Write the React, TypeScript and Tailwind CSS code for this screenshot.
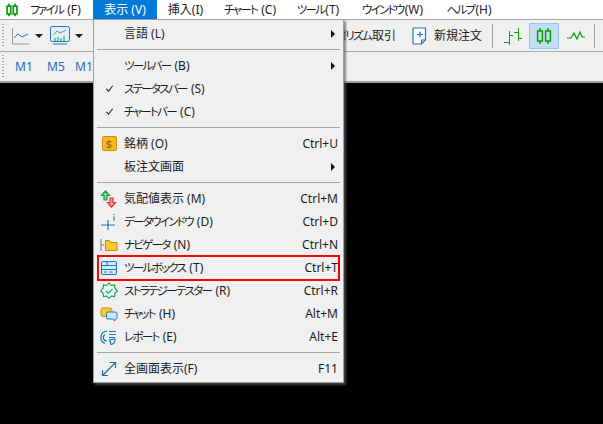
const font = { fontFamily: '"Noto Sans", "Noto Sans CJK JP", sans-serif' };

// the katakana in the reference is set much narrower than the kanji
function Label({ text }: { text: string }) {
  return (
    <>
      {text.split(/([ァ-ヶー]+)/).map((part, i) =>
        i % 2 === 1 ? (
          <span key={i} className="text-[11.500px] tracking-[-1.700px] mr-[1px]">{part}</span>
        ) : (
          <span key={i}>{part}</span>
        ),
      )}
    </>
  );
}

function Grip() {
  return (
    <div className="flex flex-col gap-[2px] w-[3px] h-[24px] overflow-hidden">
      {Array.from({ length: 8 }).map((_, i) => (
        <div key={i} className="w-[2px] h-[1px] bg-[#a8a8a8]" />
      ))}
    </div>
  );
}

function Caret() {
  return <div className="w-0 h-0 border-x-[4px] border-x-transparent border-t-[4px] border-t-[#222]" />;
}

function Candle({ className = 'w-[18px] h-[18px]', weight = '1.500' }: { className?: string; weight?: string }) {
  return (
    <svg viewBox="0 0 18 18" className={className} fill="none" stroke="#0aa00a" strokeWidth={weight}>
      <path d="M5 1v3M5 14v3M13 1v3M13 14v3" />
      <rect x="2.600" y="4" width="4.800" height="10" />
      <rect x="10.600" y="4" width="4.800" height="10" />
    </svg>
  );
}

type Row =
  | { sep: true }
  | { sep?: false; label: string; key?: string; icon?: React.ReactNode; sub?: boolean; check?: boolean };

const rows: Row[] = [
  { label: '言語 (L)', sub: true },
  { sep: true },
  { label: 'ツールバー (B)', sub: true },
  { label: 'ステータスバー (S)', check: true },
  { label: 'チャートバー (C)', check: true },
  { sep: true },
  {
    label: '銘柄 (O)',
    key: 'Ctrl+U',
    icon: (
      <div className="w-[15px] h-[15px] rounded-[2px] bg-[#f5b921] border border-[#c98f0a] flex items-center justify-center text-[11px] leading-none font-bold text-[#a8720a]">
        $
      </div>
    ),
  },
  { label: '板注文画面', sub: true },
  { sep: true },
  {
    label: '気配値表示 (M)',
    key: 'Ctrl+M',
    icon: (
      <svg viewBox="0 0 18 18" className="w-[18px] h-[18px]" fill="none" strokeWidth="1.200">
        <path d="M5.500 1 1.500 5.500H4V10H7V5.500H9.500Z" stroke="#11a03c" fill="#7fd89a" />
        <path d="M11.500 17 7.500 12.500H10V8H13V12.500H15.500Z" stroke="#d8352e" fill="#f4a39c" />
      </svg>
    ),
  },
  {
    label: 'データウインドウ (D)',
    key: 'Ctrl+D',
    icon: (
      <svg viewBox="0 0 18 18" className="w-[18px] h-[18px]" fill="none" stroke="#1a6fb0" strokeWidth="1.100">
        <path d="M1 12h5M10 12h5M8 7v3.500M8 13.500V17" />
        <path d="M8 11l1 1-1 1-1-1z" />
        <path d="M14 1v1M14 3.500V8" />
      </svg>
    ),
  },
  {
    label: 'ナビゲータ (N)',
    key: 'Ctrl+N',
    icon: (
      <svg viewBox="0 0 18 18" className="w-[18px] h-[18px]" fill="none">
        <path d="M1 3v12M1 9h3" stroke="#777" strokeWidth="1" />
        <path d="M5.500 4.500h4l1 2h6.500v8h-11.500z" fill="#fbcb2f" stroke="#b98d10" strokeWidth="1" />
      </svg>
    ),
  },
  {
    label: 'ツールボックス (T)',
    key: 'Ctrl+T',
    icon: (
      <svg viewBox="0 0 18 18" className="w-[18px] h-[18px]" fill="none" stroke="#1a78c2" strokeWidth="1.100">
        <rect x="1.500" y="2.500" width="15" height="13" rx="1.500" fill="#d7ebfa" />
        <path d="M1.500 6.500h15M7 2.500v4M1.500 10.500h15M4 13h3M9.500 13h3" />
      </svg>
    ),
  },
  {
    label: 'ストラテジーテスター (R)',
    key: 'Ctrl+R',
    icon: (
      <svg viewBox="0 0 18 18" className="w-[18px] h-[18px]" fill="none" stroke="#11a03c" strokeWidth="1.100">
        <path d="M9 1l2.300 2.500 3.200-.5.500 3.200L17.500 9 15 11l-.5 3.500-3.200-.5L9 16.500 6.700 14l-3.200.5L3 11 .5 9 3 6.200 3.500 3l3.200.5z" />
        <path d="M6 9l2.200 2.200L12.500 7" strokeWidth="1.400" stroke="#26b5a0" />
      </svg>
    ),
  },
  {
    label: 'チャット (H)',
    key: 'Alt+M',
    icon: (
      <svg viewBox="0 0 18 18" className="w-[18px] h-[18px]" strokeWidth="1">
        <rect x="1" y="3" width="11" height="8.500" rx="2" fill="#fbc92f" stroke="#c1930f" />
        <path d="M8 7h7.500a1.500 1.500 0 0 1 1.500 1.500v4a1.500 1.500 0 0 1-1.500 1.500H15v2l-2.500-2H8a1.500 1.500 0 0 1-1.500-1.500v-4A1.500 1.500 0 0 1 8 7z" fill="#cfe6f8" stroke="#1a78c2" />
      </svg>
    ),
  },
  {
    label: 'レポート (E)',
    key: 'Alt+E',
    icon: (
      <svg viewBox="0 0 18 18" className="w-[18px] h-[18px]" fill="none" stroke="#1a78c2" strokeWidth="1.200">
        <path d="M7 3A6.500 6.500 0 0 0 5 15.500" />
        <path d="M5 6.500A3.500 3.500 0 0 0 7 13" />
        <path d="M9 3.500h7M9 6.500h7M9 9.500h6M15 11a5 5 0 0 1-4 5.500L9.500 12z" />
      </svg>
    ),
  },
  { sep: true },
  {
    label: '全画面表示(F)',
    key: 'F11',
    icon: (
      <svg viewBox="0 0 18 18" className="w-[18px] h-[18px]" fill="none" stroke="#1a6fb0" strokeWidth="1.200">
        <path d="M2.500 15.500 15.500 2.500M10 2.500h5.500V8M2.500 10v5.500H8" />
      </svg>
    ),
  },
];

const menuItems = [
  { label: 'ファイル (F)', w: 'w-[63px] justify-start' },
  { label: '表示 (V)', w: 'w-[64px] justify-center', active: true },
  { label: '挿入(I)', w: 'w-[57px] justify-center' },
  { label: 'チャート (C)', w: 'w-[72px] justify-center' },
  { label: 'ツール(T)', w: 'w-[64px] justify-center' },
  { label: 'ウインドウ(W)', w: 'w-[85px] justify-center' },
  { label: 'ヘルプ(H)', w: 'w-[68px] justify-center' },
];

export default function App() {
  return (
    <div className="relative w-[603px] h-[424px] overflow-hidden bg-black text-[12px] text-[#1c1c1c] [font-feature-settings:'palt']" style={font}>
      <div className="h-[83px] bg-[#f0f0f0] border-b-2 border-[#a0a0a0] flex flex-col">
        <div className="h-[19px] bg-white flex items-center pl-[5px]">
          <Candle className="w-[14px] h-[14px] mr-[11px]" weight="2.200" />
          {menuItems.map((m) => (
            <div
              key={m.label}
              className={`${m.w} h-[19px] flex items-center whitespace-pre ${m.active ? 'bg-[#0078d7] text-white' : ''}`}
            >
              <Label text={m.label} />
            </div>
          ))}
        </div>
        <div className="h-[33px] border-t border-[#a8a8a8] border-b border-b-[#a8a8a8] flex items-center pl-[2px]">
          <Grip />
          <svg viewBox="0 0 18 18" className="w-[18px] h-[18px] ml-[7px]" fill="none">
            <path d="M.5 1v16h17" stroke="#999" />
            <path d="M2 11l4-4 4 3 6-3" stroke="#1a78c2" />
          </svg>
          <div className="ml-[5px]"><Caret /></div>
          <svg viewBox="0 0 20 20" className="w-[20px] h-[20px] ml-[7px]" fill="none">
            <rect x=".5" y=".5" width="19" height="15" rx="2" stroke="#1a78c2" fill="#e0f0fb" />
            <path d="M3 9l4-4 3 2 6-3" stroke="#888" />
            <path d="M5 15v-3M8 15v-4M11 15v-3M14 15v-5" stroke="#11a03c" />
            <path d="M3 18h14" stroke="#1a78c2" />
          </svg>
          <div className="ml-[5px]"><Caret /></div>
          <div className="flex-1 flex justify-end items-center">
            <span className="whitespace-nowrap"><Label text="アルゴリズム取引" /></span>
            <svg viewBox="0 0 16 18" className="w-[16px] h-[18px] ml-[16px]" fill="none" stroke="#1a78c2" strokeWidth="1.200">
              <path d="M2.500 1h11v12l-4 4h-7.500a1 1 0 0 1-1-1V2a1 1 0 0 1 1-1z" fill="#fff" />
              <path d="M9.500 17v-4h4M5 7.500h6M8 4.500v6" />
            </svg>
            <span className="ml-[6px] whitespace-nowrap">新規注文</span>
            <div className="w-px h-[24px] bg-[#a0a0a0] ml-[10px]" />
            <svg viewBox="0 0 18 18" className="w-[18px] h-[18px] ml-[11px]" fill="none" stroke="#0aa00a" strokeWidth="1">
              <path d="M5.500 4v14M0 15.500h5.500M5.500 8.500H9M14.500 1v13M10 5.500h4.500M14.500 11.500H18" />
            </svg>
            <div className="w-[30px] h-[26px] ml-[7px] bg-[#c2dcf2] border border-[#93c7f0] flex items-center justify-center">
              <Candle />
            </div>
            <svg viewBox="0 0 18 12" className="w-[18px] h-[12px] ml-[8px]" fill="none" stroke="#0aa00a" strokeWidth="1.200">
              <path d="M0 8h4l3-5 3 6 3-7 2 5h3" />
            </svg>
            <div className="w-px h-[24px] bg-[#a0a0a0] ml-[9px] mr-[8px]" />
          </div>
        </div>
        <div className="flex-1 flex items-center pl-[2px] text-[#1a6fb0]">
          <Grip />
          <div className="ml-[10px] w-[32px]">M1</div>
          <div className="w-[28px]">M5</div>
          <div className="w-[28px]">M15</div>
        </div>
      </div>

      <div className="absolute left-[93px] top-[19px] w-[251px] h-[364px] bg-[#f0f0f0] border border-[#a0a0a0] shadow-[2px_2px_2px_rgba(90,90,90,0.7)] pt-[2px]">
        {rows.map((r, i) =>
          r.sep ? (
            <div key={i} className="h-[9px] flex items-center px-[3px]">
              <div className="w-full h-px bg-[#a8a8a8]" />
            </div>
          ) : (
            <div key={i} className="h-[23px] flex items-center relative">
              <div className="w-[30px] flex items-center justify-center">
                {r.check && (
                  <svg viewBox="0 0 10 10" className="w-[9px] h-[9px]" fill="none" stroke="#222" strokeWidth="1.200">
                    <path d="M1.500 5.500 4 8 8.500 2" />
                  </svg>
                )}
                {r.icon}
              </div>
              <span className="whitespace-pre"><Label text={r.label} /></span>
              {r.key && <span className="ml-auto mr-[5px]">{r.key}</span>}
              {r.sub && <div className="ml-auto mr-[8px] w-0 h-0 border-y-[4px] border-y-transparent border-l-[4px] border-l-[#111]" />}
            </div>
          ),
        )}
        <div className="absolute left-[3px] top-[235px] w-[243px] h-[26px] border-2 border-[#ff0000]" />
      </div>
    </div>
  );
}
